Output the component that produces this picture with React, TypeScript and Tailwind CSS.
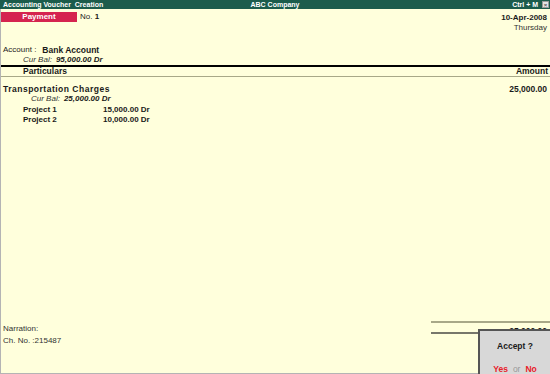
// Tally-style "Accounting Voucher Creation" screen: a payment voucher with
// one ledger line split across two cost centres, and the Accept? prompt.

const rows = [
  { name: 'Project 1', amount: '15,000.00 Dr' },
  { name: 'Project 2', amount: '10,000.00 Dr' },
]

export default function App() {
  return (
    <div className="relative flex h-[374px] w-[550px] flex-col overflow-hidden bg-[#ffffdc] font-['Liberation_Sans',Arial,sans-serif] text-[8px] text-[#1a1a1a]">
      <TitleBar />
      <div className="flex flex-1 flex-col border-b border-l border-[#b4b4b4]">
        <div className="flex justify-between pt-[3px]">
          <div className="flex h-[10px] items-center">
            <div className="flex h-[10px] w-[76px] items-center justify-center bg-[#d5244f] text-[8px] font-bold leading-[10px] text-white">
              Payment
            </div>
            <span className="ml-[3px] leading-[10px]">
              No. <b>1</b>
            </span>
          </div>
          <div className="flex flex-col items-end pt-[1px] pr-[3px] leading-[10px]">
            <span className="font-bold">10-Apr-2008</span>
            <span className="text-[#333]">Thursday</span>
          </div>
        </div>

        <div className="mt-[12px] flex pl-[2px] leading-[10px]">
          <span>Account :</span>
          <span className="ml-[6px] text-[8.5px] font-bold">Bank Account</span>
        </div>
        <CurBal value="95,000.00 Dr" indent="pl-[22px]" />

        <div className="h-[2px] bg-black" />
        <div className="flex h-[9px] items-center justify-between text-[8.5px] font-bold leading-[9px]">
          <span className="pl-[22px]">Particulars</span>
          <span className="pr-[2px]">Amount</span>
        </div>
        <div className="h-px bg-[#a8a888]" />

        <div className="mt-[7px] flex justify-between pl-[2px] pr-[3px] text-[8.5px] font-bold leading-[10px]">
          <span className="tracking-[0.5px]">Transportation Charges</span>
          <span>25,000.00</span>
        </div>
        <CurBal value="25,000.00 Dr" indent="pl-[30px]" />
        <div className="mt-[1px] flex flex-col">
          {rows.map((r) => (
            <div key={r.name} className="flex pl-[22px] text-[8px] font-bold leading-[10px]">
              <span className="w-[80px]">{r.name}</span>
              <span>{r.amount}</span>
            </div>
          ))}
        </div>

        <div className="flex-1" />

        <div className="flex justify-between pb-[26px]">
          <div className="flex flex-col pl-[2px] pt-[2px] leading-[12px] text-[#333]">
            <span>Narration:</span>
            <span>Ch. No. :215487</span>
          </div>
          <div className="flex w-[119px] flex-col">
            <div className="h-[2px] bg-[#a8a888]" />
            {/* total is mostly hidden under the prompt, only its top shows */}
            <div className="h-[9px] pt-[2px]">
              <div className="h-[4px] overflow-hidden pr-[3px] text-right text-[8.5px] font-bold leading-[12px]">
                25,000.00
              </div>
            </div>
            <div className="h-[2px] bg-[#77776a]" />
          </div>
        </div>
      </div>

      <AcceptDialog />
    </div>
  )
}

function TitleBar() {
  return (
    <div className="relative flex h-[9px] items-center justify-between bg-[#1c5c4c] pl-[3px] pr-[1px] text-[7px] font-bold leading-[9px] text-white">
      <span className="whitespace-pre">Accounting Voucher  Creation</span>
      <span className="absolute left-1/2 -translate-x-1/2">ABC Company</span>
      <div className="flex items-center">
        <span>Ctrl + M</span>
        <span className="ml-[4px] flex h-[7px] w-[7px] items-center justify-center border border-[#9a9a9a] bg-[#e4e4e4] text-[6px] leading-none text-[#555]">
          ×
        </span>
      </div>
    </div>
  )
}

function CurBal({ value, indent }: { value: string; indent: string }) {
  return (
    <div className={`flex ${indent} italic leading-[10px]`}>
      <span className="text-[#333]">Cur Bal:</span>
      <span className="ml-[4px] font-bold">{value}</span>
    </div>
  )
}

function AcceptDialog() {
  return (
    <div className="absolute right-0 bottom-0 flex h-[45px] w-[72px] flex-col items-center border-t-2 border-l-2 border-[#555] bg-[#d8d8d8]">
      <span className="mt-[10px] text-[8.5px] font-bold leading-[10px]">Accept ?</span>
      <div className="mt-[13px] flex items-baseline gap-[5px] text-[8.5px] font-bold leading-[10px]">
        <span className="text-[#e8202a]">Yes</span>
        <span className="font-normal text-[#999]">or</span>
        <span className="text-[#e8202a]">No</span>
      </div>
    </div>
  )
}
